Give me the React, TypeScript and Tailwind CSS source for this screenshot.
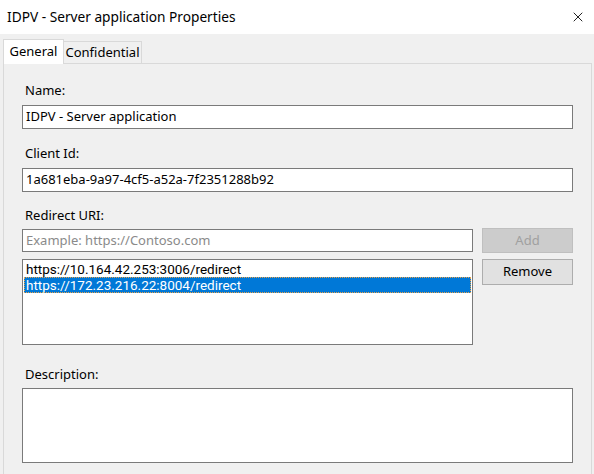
import { X } from "lucide-react";

const FONT = { fontFamily: '"Noto Sans", "Open Sans", sans-serif' };
const LIST_FONT = { fontFamily: 'Roboto, "Noto Sans", sans-serif' };

const inputBox =
  "h-[24px] border border-[#7a7a7a] bg-white px-[3px] flex items-center text-[13px] text-black";

const uris = ["https://10.164.42.253:3006/redirect", "https://172.23.216.22:8004/redirect"];

export default function App() {
  return (
    <div className="w-[594px] h-[474px] overflow-hidden bg-[#f0f0f0] text-[13px] text-black" style={FONT}>
      {/* title bar */}
      <div className="h-[34px] bg-white flex items-center justify-between pl-[7px] pr-[8px]">
        <span className="text-[13.7px] text-black">IDPV - Server application Properties</span>
        <X className="w-[16px] h-[16px] text-black" strokeWidth={1.3} />
      </div>

      {/* tabs */}
      <div className="px-[3px] pt-[4px]">
        <div className="flex items-end h-[25px] relative z-10">
          <div className="h-[25px] w-[61px] bg-white border border-b-0 border-[#d9d9d9] flex items-center justify-center -mb-px">
            General
          </div>
          <div className="h-[22px] w-[78px] bg-[#f0f0f0] border border-b-0 border-l-0 border-[#d9d9d9] flex items-center justify-center">
            Confidential
          </div>
        </div>

        {/* page */}
        <div className="w-[589px] h-[420px] border border-[#d9d9d9] bg-[#f0f0f0] pl-[18px] pt-[18px]">
          <div className="w-[551px] flex flex-col">
            <label className="pl-[3px] leading-[16px] h-[16px]">Name:</label>
            <div className={`${inputBox} mt-[7px]`}>IDPV - Server application</div>

            <label className="pl-[3px] leading-[16px] h-[16px] mt-[16px]">Client Id:</label>
            <div className={`${inputBox} mt-[7px]`}>1a681eba-9a97-4cf5-a52a-7f2351288b92</div>

            <label className="pl-[3px] leading-[16px] h-[16px] mt-[15px]">Redirect URI:</label>
            <div className="flex gap-[9px] mt-[6px]">
              <div className="flex flex-col w-[451px]">
                <div className="h-[23px] border border-[#7a7a7a] bg-white px-[3px] flex items-center text-[#8a8a8a]">
                  Example: https://Contoso.com
                </div>
                <div
                  className="h-[86px] mt-[7px] border border-[#7a7a7a] bg-white p-[1px] flex flex-col text-[13.5px]"
                  style={LIST_FONT}
                >
                  {uris.map((uri, i) => (
                    <div
                      key={uri}
                      className={
                        i === 1
                          ? "h-[16px] leading-[16px] px-[2px] bg-[#0078d7] text-white outline-1 outline-dotted outline-[#e7a24a] -outline-offset-1"
                          : "h-[16px] leading-[16px] px-[2px]"
                      }
                    >
                      {uri}
                    </div>
                  ))}
                </div>
              </div>
              <div className="flex flex-col gap-[6px] w-[91px] -mt-px">
                <div className="h-[25px] bg-[#cccccc] border border-[#bfbfbf] flex items-center justify-center text-[#a0a0a0]">
                  Add
                </div>
                <div className="h-[26px] bg-[#e1e1e1] border border-[#adadad] flex items-center justify-center">
                  Remove
                </div>
              </div>
            </div>

            <label className="pl-[3px] leading-[16px] h-[16px] mt-[21px]">Description:</label>
            <div className="h-[75px] mt-[6px] border border-[#7a7a7a] bg-white" />
          </div>
        </div>
      </div>
    </div>
  );
}
